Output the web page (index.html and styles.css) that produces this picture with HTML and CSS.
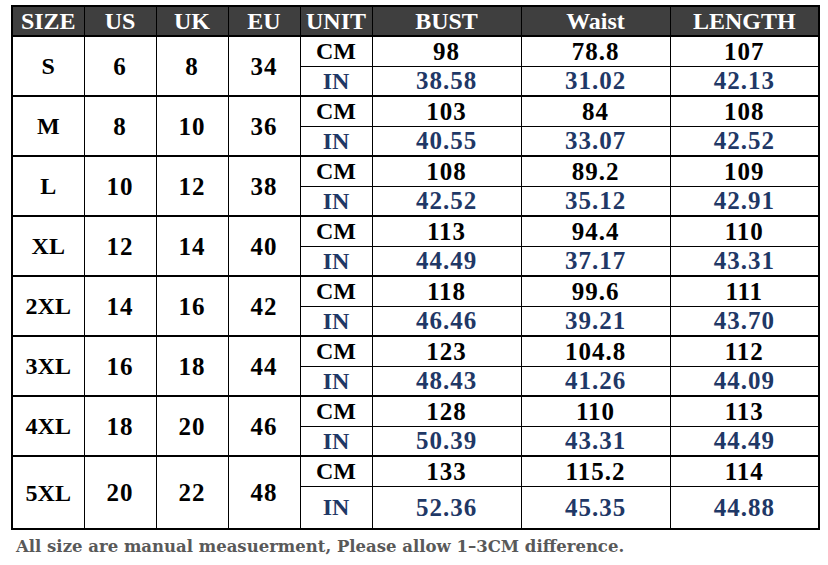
FILE: index.html
```html
<!DOCTYPE html>
<html>
<head>
<meta charset="utf-8">
<link rel="stylesheet" href="styles.css">
</head>
<body>
<table class="chart">
<colgroup>
<col class="c-s"><col class="c-s"><col class="c-s"><col class="c-s"><col class="c-s">
<col class="c-w"><col class="c-w"><col class="c-w">
</colgroup>
<thead>
<tr class="head"><th>SIZE</th><th>US</th><th>UK</th><th>EU</th><th>UNIT</th><th>BUST</th><th>Waist</th><th>LENGTH</th></tr>
</thead>
<tbody>
<tr class="cm"><td rowspan="2">S</td><td rowspan="2">6</td><td rowspan="2">8</td><td rowspan="2">34</td><td>CM</td><td>98</td><td>78.8</td><td>107</td></tr>
<tr class="in"><td>IN</td><td>38.58</td><td>31.02</td><td>42.13</td></tr>
<tr class="cm"><td rowspan="2">M</td><td rowspan="2">8</td><td rowspan="2">10</td><td rowspan="2">36</td><td>CM</td><td>103</td><td>84</td><td>108</td></tr>
<tr class="in"><td>IN</td><td>40.55</td><td>33.07</td><td>42.52</td></tr>
<tr class="cm"><td rowspan="2">L</td><td rowspan="2">10</td><td rowspan="2">12</td><td rowspan="2">38</td><td>CM</td><td>108</td><td>89.2</td><td>109</td></tr>
<tr class="in"><td>IN</td><td>42.52</td><td>35.12</td><td>42.91</td></tr>
<tr class="cm"><td rowspan="2">XL</td><td rowspan="2">12</td><td rowspan="2">14</td><td rowspan="2">40</td><td>CM</td><td>113</td><td>94.4</td><td>110</td></tr>
<tr class="in"><td>IN</td><td>44.49</td><td>37.17</td><td>43.31</td></tr>
<tr class="cm"><td rowspan="2">2XL</td><td rowspan="2">14</td><td rowspan="2">16</td><td rowspan="2">42</td><td>CM</td><td>118</td><td>99.6</td><td>111</td></tr>
<tr class="in"><td>IN</td><td>46.46</td><td>39.21</td><td>43.70</td></tr>
<tr class="cm"><td rowspan="2">3XL</td><td rowspan="2">16</td><td rowspan="2">18</td><td rowspan="2">44</td><td>CM</td><td>123</td><td>104.8</td><td>112</td></tr>
<tr class="in"><td>IN</td><td>48.43</td><td>41.26</td><td>44.09</td></tr>
<tr class="cm"><td rowspan="2">4XL</td><td rowspan="2">18</td><td rowspan="2">20</td><td rowspan="2">46</td><td>CM</td><td>128</td><td>110</td><td>113</td></tr>
<tr class="in"><td>IN</td><td>50.39</td><td>43.31</td><td>44.49</td></tr>
<tr class="cm"><td rowspan="2">5XL</td><td rowspan="2">20</td><td rowspan="2">22</td><td rowspan="2">48</td><td>CM</td><td>133</td><td>115.2</td><td>114</td></tr>
<tr class="in last"><td>IN</td><td>52.36</td><td>45.35</td><td>44.88</td></tr>
</tbody>
</table>
<p class="note">All size are manual measuerment, Please allow 1–3CM difference.</p>
</body>
</html>
```
FILE: styles.css
```css
html, body {
  margin: 0;
  padding: 0;
  background: #ffffff;
}

.chart {
  margin: 5px 0 0 11px;
  border-collapse: collapse;
  table-layout: fixed;
  width: 809px;
  border: 2px solid #000;
  font-family: "Liberation Serif", "Times New Roman", serif;
  font-weight: bold;
  font-size: 24px;
  color: #000;
}

.c-s { width: 72px; }
.c-w { width: 149px; }

.chart th,
.chart td {
  border: 1px solid #000;
  padding: 0;
  text-align: center;
  vertical-align: middle;
  line-height: 1;
}

/* numeric cells: wider, slightly larger digits */
.cm td:nth-child(n+2):not(:nth-child(5)),
.in td:nth-child(n+2) {
  font-size: 25px;
  letter-spacing: 1px;
}

.head {
  height: 30px;
  background: #3f3f3f;
}

.head th {
  color: #fff;
  font-weight: bold;
}

.cm {
  height: 30px;
}

.cm td {
  border-top: 2px solid #000;
}

.in {
  height: 30px;
  color: #1f3866;
}

.in td {
  border-top: 1px solid #2b2f3f;
}

.in.last {
  height: 43px;
}

.note {
  margin: 7px 0 0 16px;
  font-family: "DejaVu Serif", serif;
  font-weight: bold;
  font-size: 16.5px;
  color: #595959;
}
```
